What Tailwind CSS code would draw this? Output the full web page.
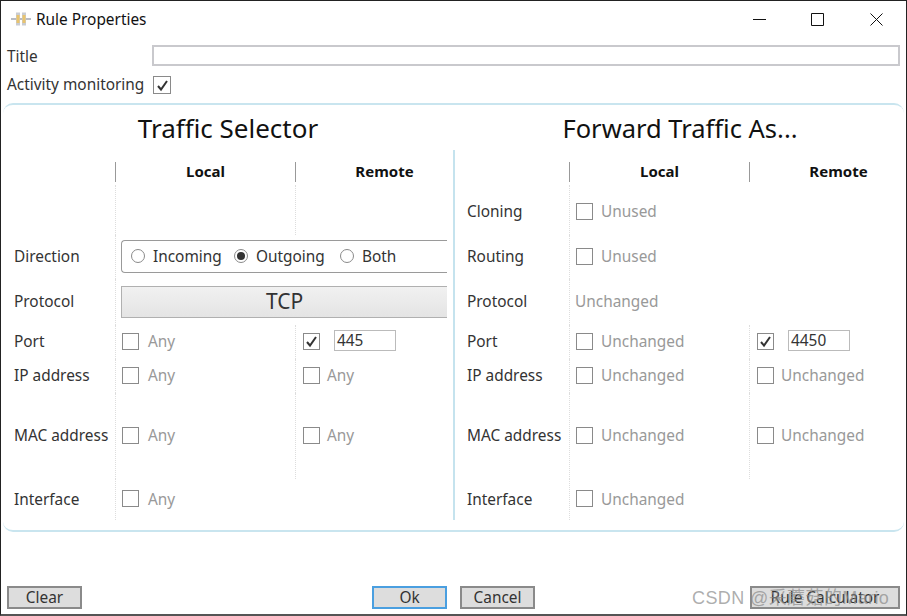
<!DOCTYPE html>
<html>
<head>
<meta charset="utf-8">
<title>Rule Properties</title>
<script src="https://cdn.jsdelivr.net/npm/@tailwindcss/browser@4"></script>
</head>
<body class="bg-white">
<div class="relative w-[907px] h-[616px] flex flex-col overflow-hidden bg-white border border-[#222] border-b-2 border-b-[#555] font-['Noto_Sans','Noto_Sans_CJK_SC',sans-serif] text-[15.4px] text-[#333]">

  <!-- title bar -->
  <div class="h-[37px] shrink-0 flex items-center pl-[10px] text-[#111]">
    <svg class="w-[20px] h-[20px]" viewBox="0 0 20 20">
      <path d="M0 9h6M14 9h6M10 8v2" stroke="#b9bcc4" stroke-width="2"/>
      <path d="M7 2.500v13M13 2.500v13" stroke="#c9ccd2" stroke-width="4"/>
      <path d="M7 5v8M13 5v8" stroke="#e9c46e" stroke-width="3"/>
    </svg>
    <span class="ml-[5px]">Rule Properties</span>
    <div class="ml-auto flex items-center">
      <svg class="w-[13px] h-[13px] mr-[45px]" viewBox="0 0 13 13"><path d="M0 6.500h13" stroke="#111"/></svg>
      <svg class="w-[13px] h-[13px] mr-[46px]" viewBox="0 0 13 13"><path d="M.5.5h12v12H.5z" fill="none" stroke="#111"/></svg>
      <svg class="w-[13px] h-[13px] mr-[23px]" viewBox="0 0 13 13"><path d="M.5.5l12 12M12.500.5l-12 12" stroke="#111"/></svg>
    </div>
  </div>

  <!-- title field -->
  <div class="mt-[7px] h-[21px] shrink-0 flex items-center pl-[6px] pr-[6px]">
    <label class="w-[145px] pt-[2px]">Title</label>
    <input class="flex-1 h-[21px] bg-white border-2 border-[#c9c9cd]" type="text">
  </div>

  <!-- activity monitoring -->
  <div class="mt-[9px] h-[20px] shrink-0 flex items-center pl-[6px]">
    <span class="w-[146px]">Activity monitoring</span>
    <span class="w-[18px] h-[18px] border border-[#8a8a8a] flex items-center justify-center">
      <svg class="w-[13px] h-[13px]" viewBox="0 0 13 13"><path d="M2 7l3 3.500L11 2" fill="none" stroke="#333" stroke-width="2"/></svg>
    </span>
  </div>

  <!-- group box -->
  <div class="mt-[8px] mx-[2px] h-[429px] shrink-0 rounded-[10px] border-y-2 border-[#c9e5ef] grid grid-cols-[450px_1fr]">

    <!-- traffic selector -->
    <div>
      <h2 class="h-[45px] pt-[1px] flex items-center justify-center text-[26px] text-[#111]">Traffic Selector</h2>
      <div class="h-[370px] pt-[11px] pl-[11px] grid grid-cols-[101px_180px_152px] grid-rows-[24px_50px_44px_46px_34px_34px_86px_41px]">
        <div></div>
        <div class="mt-[1px] mb-[3px] border-l border-[#999] font-bold text-[#111] text-center text-[15px] leading-[18px]">Local</div>
        <div class="mt-[1px] mb-[3px] pl-[26px] border-l border-[#999] font-bold text-[#111] text-center text-[15px] leading-[18px]">Remote</div>

        <div></div>
        <div class="border-l border-dotted border-[#ddd]"></div>
        <div class="border-l border-dotted border-[#ddd]"></div>

        <div class="flex items-center">Direction</div>
        <div class="col-span-2 flex items-center border-l border-dotted border-[#ddd]">
          <div class="ml-[5px] mb-[1px] w-[326px] h-[33px] flex items-center pl-[9px] border border-r-0 border-[#9a9a9a] rounded-l-[4px]">
            <span class="w-[103px] flex items-center gap-[8px]"><span class="w-[14px] h-[14px] rounded-full border border-[#8a8a8a]"></span>Incoming</span>
            <span class="w-[106px] flex items-center gap-[8px]"><span class="w-[14px] h-[14px] rounded-full border border-[#8a8a8a] flex items-center justify-center"><span class="w-[8px] h-[8px] rounded-full bg-[#333]"></span></span>Outgoing</span>
            <span class="flex items-center gap-[8px]"><span class="w-[14px] h-[14px] rounded-full border border-[#8a8a8a]"></span>Both</span>
          </div>
        </div>

        <div class="flex items-center">Protocol</div>
        <div class="col-span-2 flex items-center border-l border-dotted border-[#ddd]">
          <div class="ml-[5px] mb-[1px] w-[326px] h-[32px] flex items-center justify-center border border-r-0 border-[#b0b0b0] bg-linear-to-b from-[#f1f1f1] to-[#e4e4e4] text-[21px]">TCP</div>
        </div>

        <div class="flex items-center">Port</div>
        <div class="flex items-center pl-[6px] gap-[9px] text-[#999] border-l border-dotted border-[#ddd]"><span class="w-[17px] h-[17px] mb-[2px] border border-[#8a8a8a]"></span>Any</div>
        <div class="flex items-center pl-[7px] border-l border-dotted border-[#ddd]">
          <span class="w-[17px] h-[17px] mb-[2px] border border-[#8a8a8a] flex items-center justify-center">
            <svg class="w-[13px] h-[13px]" viewBox="0 0 13 13"><path d="M2 7l3 3.500L11 2" fill="none" stroke="#333" stroke-width="2"/></svg>
          </span>
          <span class="ml-[14px] mb-[3px] w-[62px] h-[21px] pl-[2px] leading-[19px] border border-[#bbb]">445</span>
        </div>

        <div class="flex items-center">IP address</div>
        <div class="flex items-center pl-[6px] gap-[9px] text-[#999] border-l border-dotted border-[#ddd]"><span class="w-[17px] h-[17px] mb-[2px] border border-[#8a8a8a]"></span>Any</div>
        <div class="flex items-center pl-[7px] gap-[7px] text-[#999] border-l border-dotted border-[#ddd]"><span class="w-[17px] h-[17px] mb-[2px] border border-[#8a8a8a]"></span>Any</div>

        <div class="flex items-center">MAC address</div>
        <div class="flex items-center pl-[6px] gap-[9px] text-[#999] border-l border-dotted border-[#ddd]"><span class="w-[17px] h-[17px] mb-[2px] border border-[#8a8a8a]"></span>Any</div>
        <div class="flex items-center pl-[7px] gap-[7px] text-[#999] border-l border-dotted border-[#ddd]"><span class="w-[17px] h-[17px] mb-[2px] border border-[#8a8a8a]"></span>Any</div>

        <div class="flex items-center">Interface</div>
        <div class="flex items-center pl-[6px] gap-[9px] text-[#999] border-l border-dotted border-[#ddd]"><span class="w-[17px] h-[17px] mb-[2px] border border-[#8a8a8a]"></span>Any</div>
        <div></div>
      </div>
    </div>

    <!-- forward traffic as -->
    <div>
      <h2 class="h-[45px] pt-[1px] pl-[3px] flex items-center justify-center text-[25.5px] text-[#111]">Forward Traffic As...</h2>
      <div class="h-[370px] pt-[11px] pl-[12px] border-l-2 border-[#c5e3ee] grid grid-cols-[102px_180px_150px] grid-rows-[24px_50px_44px_46px_34px_34px_86px_41px]">
        <div></div>
        <div class="mt-[1px] mb-[3px] border-l border-[#999] font-bold text-[#111] text-center text-[15px] leading-[18px]">Local</div>
        <div class="mt-[1px] mb-[3px] pl-[28px] border-l border-[#999] font-bold text-[#111] text-center text-[15px] leading-[18px]">Remote</div>

        <div class="flex items-center pt-[4px]">Cloning</div>
        <div class="flex items-center pt-[4px] pl-[6px] gap-[8px] text-[#999] border-l border-dotted border-[#ddd]"><span class="w-[17px] h-[17px] mb-[2px] border border-[#8a8a8a]"></span>Unused</div>
        <div></div>

        <div class="flex items-center">Routing</div>
        <div class="flex items-center pl-[6px] gap-[8px] text-[#999] border-l border-dotted border-[#ddd]"><span class="w-[17px] h-[17px] mb-[2px] border border-[#8a8a8a]"></span>Unused</div>
        <div></div>

        <div class="flex items-center">Protocol</div>
        <div class="flex items-center pl-[5px] text-[#999] border-l border-dotted border-[#ddd]">Unchanged</div>
        <div></div>

        <div class="flex items-center">Port</div>
        <div class="flex items-center pl-[6px] gap-[8px] text-[#999] border-l border-dotted border-[#ddd]"><span class="w-[17px] h-[17px] mb-[2px] border border-[#8a8a8a]"></span>Unchanged</div>
        <div class="flex items-center pl-[7px] border-l border-dotted border-[#ddd]">
          <span class="w-[17px] h-[17px] mb-[2px] border border-[#8a8a8a] flex items-center justify-center">
            <svg class="w-[13px] h-[13px]" viewBox="0 0 13 13"><path d="M2 7l3 3.500L11 2" fill="none" stroke="#333" stroke-width="2"/></svg>
          </span>
          <span class="ml-[14px] mb-[3px] w-[62px] h-[21px] pl-[2px] leading-[19px] border border-[#bbb]">4450</span>
        </div>

        <div class="flex items-center">IP address</div>
        <div class="flex items-center pl-[6px] gap-[8px] text-[#999] border-l border-dotted border-[#ddd]"><span class="w-[17px] h-[17px] mb-[2px] border border-[#8a8a8a]"></span>Unchanged</div>
        <div class="flex items-center pl-[7px] gap-[7px] text-[#999] border-l border-dotted border-[#ddd]"><span class="w-[17px] h-[17px] mb-[2px] border border-[#8a8a8a]"></span>Unchanged</div>

        <div class="flex items-center">MAC address</div>
        <div class="flex items-center pl-[6px] gap-[8px] text-[#999] border-l border-dotted border-[#ddd]"><span class="w-[17px] h-[17px] mb-[2px] border border-[#8a8a8a]"></span>Unchanged</div>
        <div class="flex items-center pl-[7px] gap-[7px] text-[#999] border-l border-dotted border-[#ddd]"><span class="w-[17px] h-[17px] mb-[2px] border border-[#8a8a8a]"></span>Unchanged</div>

        <div class="flex items-center">Interface</div>
        <div class="flex items-center pl-[6px] gap-[8px] text-[#999] border-l border-dotted border-[#ddd]"><span class="w-[17px] h-[17px] mb-[2px] border border-[#8a8a8a]"></span>Unchanged</div>
        <div></div>
      </div>
    </div>
  </div>

  <!-- footer buttons -->
  <div class="mt-auto mb-[5px] h-[23px] flex pl-[6px] pr-[6px] leading-[19px] text-center text-[#333]">
    <button class="w-[75px] border-2 border-[#8a8a8a] bg-[#ddd]">Clear</button>
    <button class="ml-[290px] w-[75px] border-2 border-[#4a9fe0] bg-[#ddd]">Ok</button>
    <button class="ml-[13px] w-[75px] border-2 border-[#8a8a8a] bg-[#ddd]">Cancel</button>
    <button class="ml-auto w-[150px] border-2 border-[#8a8a8a] bg-[#ddd]">Rule Calculator</button>
  </div>

  <!-- watermark -->
  <div class="absolute left-[691px] top-[585px] whitespace-nowrap tracking-[0.4px] font-['Liberation_Sans','Noto_Sans_CJK_SC',sans-serif] text-[18px] leading-[24px] text-[#8a8a8a]/70">CSDN @采蘑菇的Mario</div>
</div>
</body>
</html>
